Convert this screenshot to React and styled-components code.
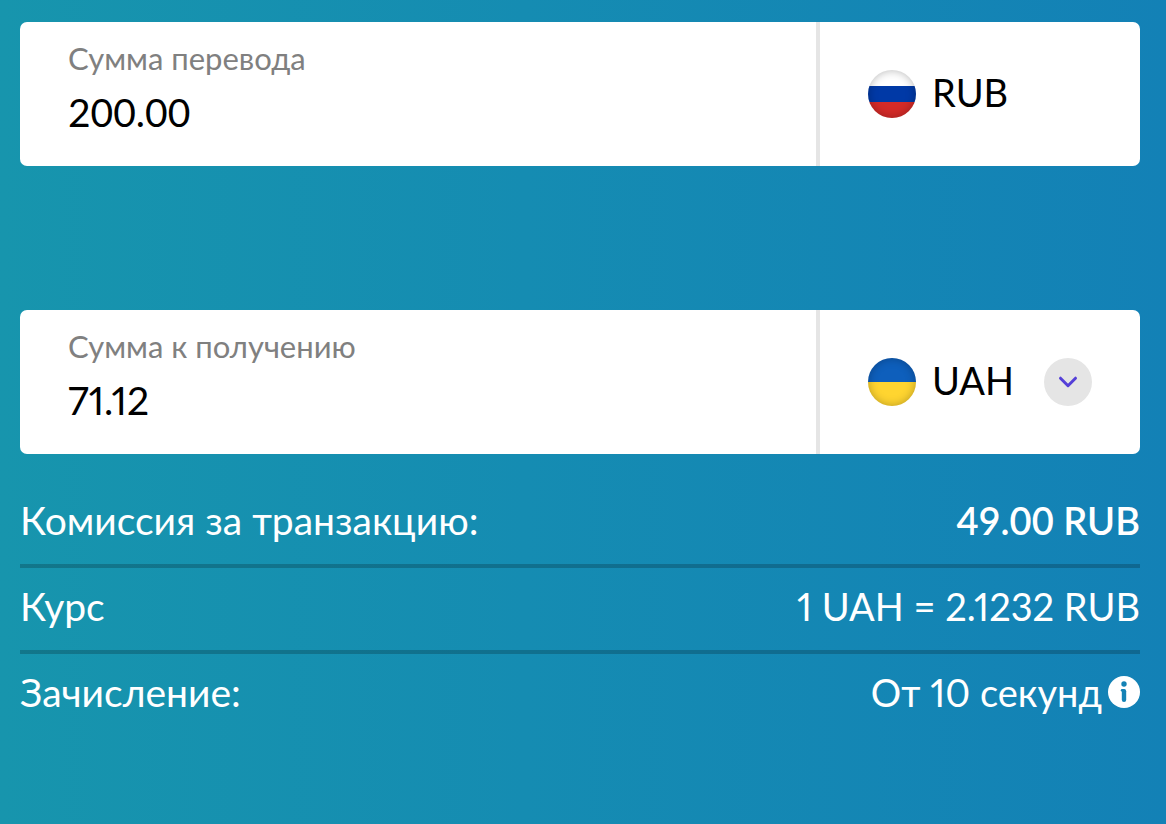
import React, { useState } from "react";
import styled, { createGlobalStyle } from "styled-components";

const GlobalStyle = createGlobalStyle`
  *, *::before, *::after { box-sizing: border-box; }
  body { margin: 0; }
  body, input, select, button { font-family: Lato, "Open Sans", sans-serif; }
`;

const figures = ({ $tabular }) => ($tabular ? "tabular-nums" : "proportional-nums");

const Page = styled.main`
  min-height: 100vh;
  padding: 22px 26px 40px 20px;
  background: linear-gradient(90deg, #1795ad 0%, #158cb2 45%, #1381b6 100%);
`;

const Form = styled.form`
  display: flex;
  flex-direction: column;
  gap: 144px;
`;

const Card = styled.div`
  display: flex;
  min-height: 144px;
  overflow: hidden;
  border-radius: 7px;
  background: #fff;
`;

const AmountField = styled.div`
  display: flex;
  flex: 1;
  flex-direction: column;
  min-width: 0;
  padding: 16px 48px 0;
`;

const AmountLabel = styled.label`
  color: #808080;
  font-size: 31px;
  line-height: 40px;
`;

const AmountInput = styled.input`
  width: 100%;
  height: 68px;
  padding: 0;
  border: 0;
  outline: none;
  background: transparent;
  color: #000;
  font-size: 39px;
  font-variant-numeric: ${figures};
`;

const Currency = styled.div`
  display: flex;
  flex: 0 0 324px;
  align-items: center;
  gap: 16px;
  padding: 0 48px;
  border-left: 4px solid #e5e5e5;
`;

const CurrencyName = styled.span`
  padding-bottom: 4px;
  font-size: 38px;
  line-height: 44px;
`;

const CurrencySelect = styled.select`
  flex: 1;
  min-width: 0;
  height: 48px;
  padding: 0 0 4px;
  border: 0;
  outline: none;
  appearance: none;
  background: transparent;
  color: #000;
  font-size: 38px;
  line-height: 44px;
`;

const Flag = styled.span`
  flex: none;
  width: 48px;
  height: 48px;
  border-radius: 50%;
  background: ${({ $stripes }) => $stripes};
  box-shadow: inset 0 0 10px rgba(0, 0, 0, 0.28);
`;

const Chevron = styled.span`
  display: grid;
  flex: none;
  place-items: center;
  width: 48px;
  height: 48px;
  border-radius: 50%;
  background: #e5e5e5;
  pointer-events: none;
`;

const Details = styled.dl`
  margin: 28px 0 0;
`;

const DetailRow = styled.div`
  display: flex;
  align-items: center;
  justify-content: space-between;
  min-height: 86px;
  padding-bottom: 6px;
  border-bottom: 4px solid rgba(0, 0, 0, 0.2);
  color: #fff;
  line-height: 48px;

  &:last-child { border-bottom-color: transparent; }
`;

const Term = styled.dt`
  margin: 0;
  font-size: 39px;
`;

const Value = styled.dd`
  display: flex;
  align-items: center;
  gap: 6px;
  margin: 0;
  font-size: 38px;
  font-weight: ${({ $strong }) => ($strong ? 600 : 400)};
  font-variant-numeric: ${figures};
`;

const InfoButton = styled.button`
  display: block;
  width: 32px;
  height: 32px;
  padding: 0;
  border: 0;
  border-radius: 50%;
  background: #fff;
  cursor: pointer;

  svg { display: block; }
`;

const FLAGS = {
  RUB: "linear-gradient(#fff 0 16px, #0039a6 16px 32px, #d52b28 32px)",
  UAH: "linear-gradient(#0e5fbc 0 24px, #ffd530 24px)",
};

function Amount({ id, label, defaultValue, tabular }) {
  return (
    <AmountField>
      <AmountLabel htmlFor={id}>{label}</AmountLabel>
      <AmountInput id={id} inputMode="decimal" defaultValue={defaultValue} $tabular={tabular} />
    </AmountField>
  );
}

export default function App() {
  const [target, setTarget] = useState("UAH");

  return (
    <Page>
      <GlobalStyle />
      <Form>
        <Card>
          <Amount id="send" label="Сумма перевода" defaultValue="200.00" tabular />
          <Currency>
            <Flag $stripes={FLAGS.RUB} />
            <CurrencyName>RUB</CurrencyName>
          </Currency>
        </Card>
        <Card>
          <Amount id="receive" label="Сумма к получению" defaultValue="71.12" />
          <Currency>
            <Flag $stripes={FLAGS[target]} />
            <CurrencySelect
              aria-label="Валюта получения"
              value={target}
              onChange={(event) => setTarget(event.target.value)}
            >
              <option>UAH</option>
              <option>RUB</option>
            </CurrencySelect>
            <Chevron>
              <svg width="20" height="14" viewBox="0 0 20 14" fill="none" aria-hidden="true">
                <path d="M2.5 3.2 10 10.7 17.5 3.2" stroke="#5540d8" strokeWidth="3" strokeLinecap="round" strokeLinejoin="round" />
              </svg>
            </Chevron>
          </Currency>
        </Card>
      </Form>
      <Details>
        <DetailRow>
          <Term>Комиссия за транзакцию:</Term>
          <Value $strong $tabular>49.00 RUB</Value>
        </DetailRow>
        <DetailRow>
          <Term>Курс</Term>
          <Value>1 UAH = 2.1232 RUB</Value>
        </DetailRow>
        <DetailRow>
          <Term>Зачисление:</Term>
          <Value>
            От 10 секунд
            <InfoButton type="button" aria-label="Подробнее о сроке зачисления">
              <svg width="32" height="32" viewBox="0 0 32 32" aria-hidden="true">
                <g fill="#1482b5">
                  <circle cx="16" cy="8" r="2.7" />
                  <rect x="13.8" y="13" width="4.4" height="13" rx="2.2" />
                  <rect x="12.8" y="13" width="4" height="2.4" rx="1.2" />
                </g>
              </svg>
            </InfoButton>
          </Value>
        </DetailRow>
      </Details>
    </Page>
  );
}
